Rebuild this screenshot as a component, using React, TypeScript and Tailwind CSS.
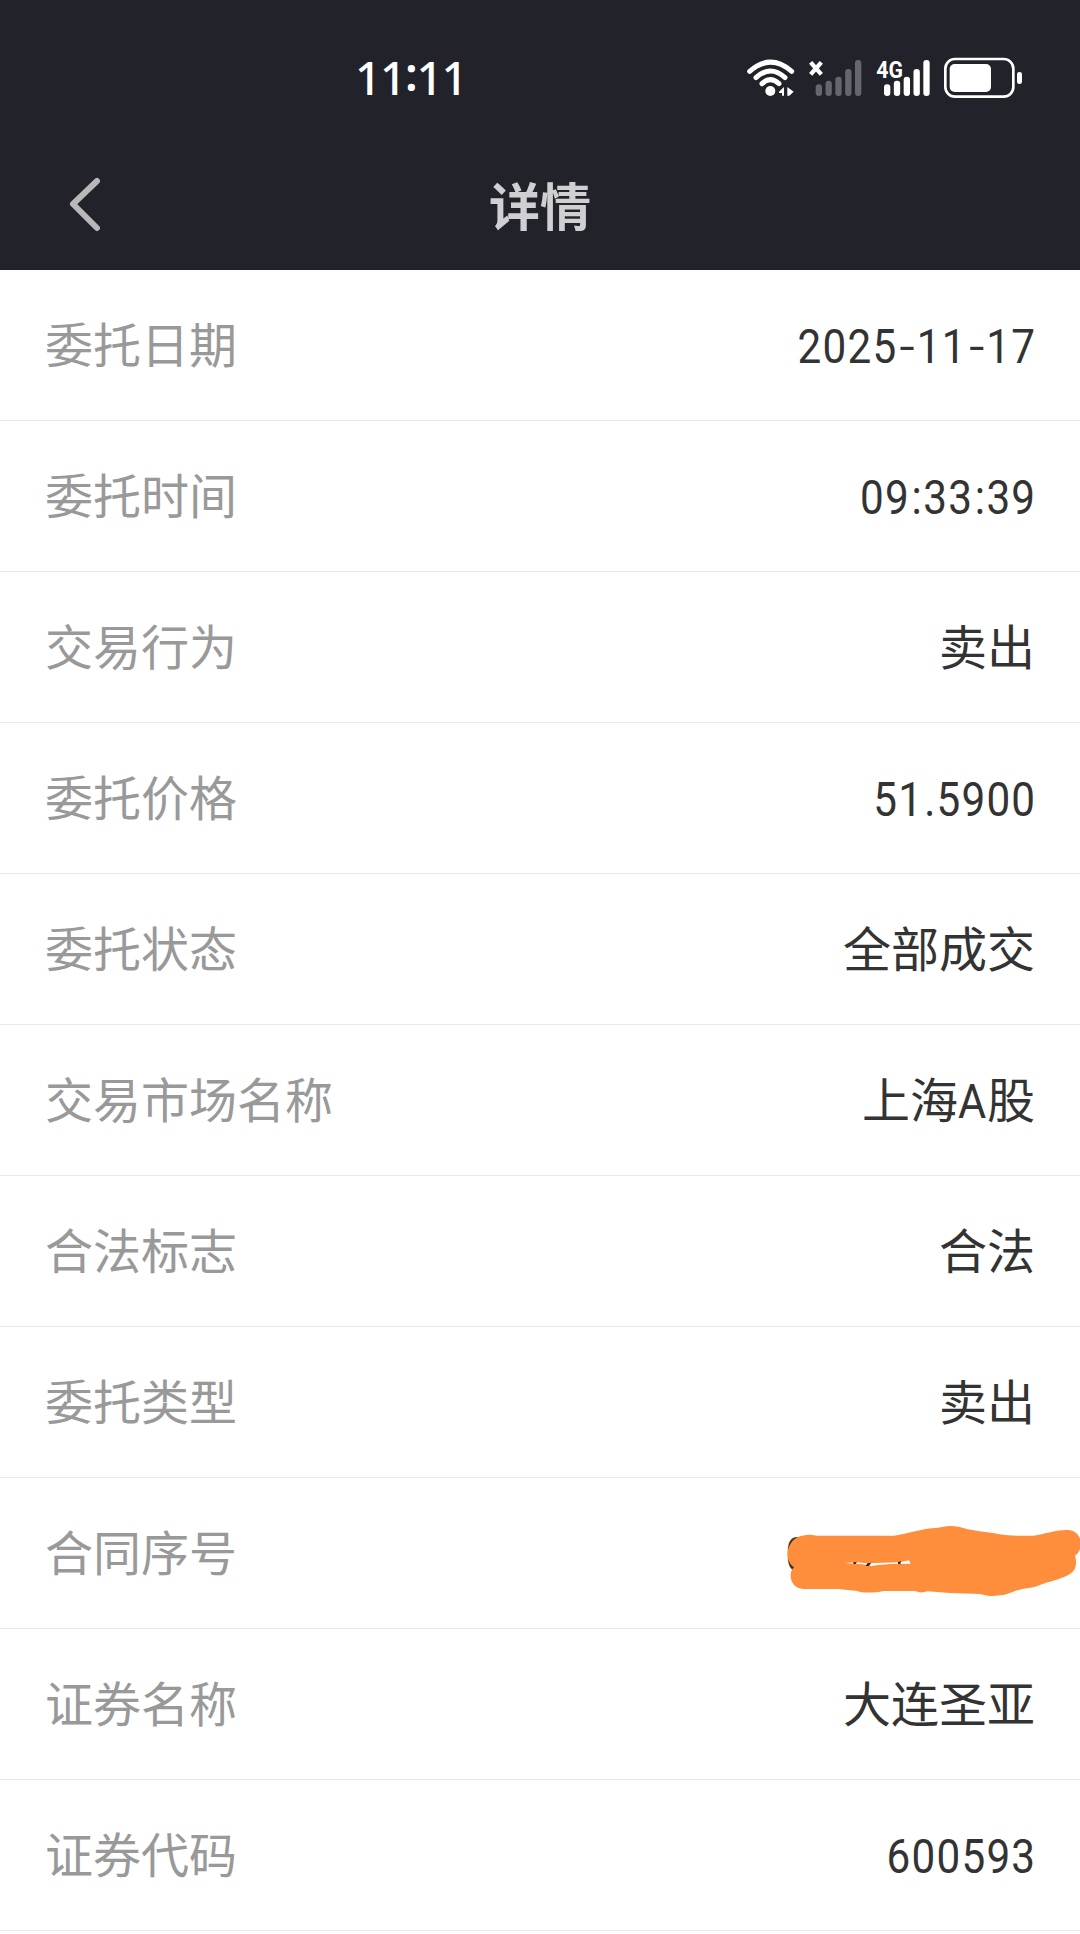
import React from 'react';

type Row = { label: string; value: string; redacted?: boolean };

const rows: Row[] = [
  { label: '委托日期', value: '2025-11-17' },
  { label: '委托时间', value: '09:33:39' },
  { label: '交易行为', value: '卖出' },
  { label: '委托价格', value: '51.5900' },
  { label: '委托状态', value: '全部成交' },
  { label: '交易市场名称', value: '上海A股' },
  { label: '合法标志', value: '合法' },
  { label: '委托类型', value: '卖出' },
  { label: '合同序号', value: '0', redacted: true },
  { label: '证券名称', value: '大连圣亚' },
  { label: '证券代码', value: '600593' },
];

function WifiIcon() {
  return (
    <svg width="48" height="38" viewBox="48 57 144 114" fill="none" stroke="#fff" strokeWidth="15" strokeLinecap="round">
      <path d="M56 94 Q118 39 182 94" />
      <path d="M75 113 Q118 73 162 113" />
      <path d="M93 131 Q118 107 144 131" />
      <circle cx="118" cy="153" r="15" fill="#fff" stroke="none" />
      <path d="M144 155 L159 141 V167 H153 V159 H144Z M169 141 L188 155 L175 167 H169Z" fill="#fff" stroke="none" />
    </svg>
  );
}

function Bars({ x, color }: { x: number; color: string }) {
  return (
    <g fill={color}>
      {[35, 46, 58, 81, 108].map((h, i) => (
        <rect key={h} x={x + i * 29.5} y={168 - h} width="19" height={h} rx="9" />
      ))}
    </g>
  );
}

function BatteryIcon() {
  return (
    <svg width="80" height="42" viewBox="636 51 240 126">
      <rect x="643" y="57" width="204" height="113" rx="29" fill="none" stroke="#fff" strokeWidth="8" />
      <rect x="656" y="72" width="124" height="84" rx="15" fill="#fff" />
      <rect x="858" y="96" width="15" height="36" rx="7" fill="#fff" />
    </svg>
  );
}

function Scribble() {
  return (
    <svg className="absolute left-0 top-0" width="310" height="120" viewBox="0 0 930 360">
      <path
        fill="#ff8e3c"
        d="M90 109 Q114 100 140 107 H370 C400 104 420 96 450 91 C475 83 500 85 520 80 C545 76 565 79 590 87 C620 93 650 97 670 99 C710 107 735 108 790 107 C825 103 850 91 890 90 C918 88 933 110 933 132 Q932 155 915 168 Q922 190 914 208 C900 230 870 235 845 244 C810 252 800 264 760 266 C730 272 715 285 690 286 C665 291 650 287 630 282 L540 279 L472 274 Q452 281 435 273 H340 C315 279 275 279 262 273 L205 267 H100 C75 265 61 247 62 225 Q63 210 72 202 C55 190 50 170 54 150 C60 128 72 115 90 109Z"
      />
      <path fill="#fff" d="M222 189 L260 187 L290 190 L390 187 L417 181 L422 191 L360 192 L325 195 L300 198 L280 193Z" />
      <path fill="#3a2418" d="M249 187 L260 186 L258 192 L251 192Z M292 190 L304 188 L297 198 L287 198Z M384 186 L393 184 L391 192 L384 192Z" />
    </svg>
  );
}

function Value({ text }: { text: string }) {
  if (!/^[\d.:-]+$/.test(text)) {
    return (
      <span className="mb-[7px] block h-[48px] text-[48px] leading-none">
        {text.split('').map((c, i) =>
          c === 'A' ? (
            <span key={i} className="inline-block w-[29px] origin-left scale-x-[0.9] font-[Roboto] leading-[0] font-normal">A</span>
          ) : (
            <span key={i}>{c}</span>
          ),
        )}
      </span>
    );
  }
  return (
    <span className="mt-[3px] mr-[-1px] inline-flex origin-right scale-x-[0.88] font-[Roboto] text-[48px] leading-none font-normal tracking-[1.4px]">
      {text.split('').map((c, i) => {
        if (c === '-') {
          return (
            <span key={i} className="inline-block w-[22px] text-center tracking-normal">
              <span className="inline-block scale-x-[1.3] scale-y-[0.9]">-</span>
            </span>
          );
        }
        if (c === ':' || c === '.') {
          return (
            <span key={i} className="inline-block w-[15px] text-center tracking-normal">{c}</span>
          );
        }
        return <span key={i}>{c}</span>;
      })}
    </span>
  );
}

export default function App() {
  return (
    <div className="min-h-[1934px] w-[1080px] overflow-hidden bg-white font-['Noto_Sans_CJK_SC',sans-serif]">
      <header className="flex h-[270px] flex-col bg-[#21222a]">
        <div className="flex h-[99px] items-end justify-between pr-[57px] pl-[355px]">
          <span className="mb-[-3px] flex font-['Noto_Sans'] text-[46px] leading-[50px] font-medium tracking-[-1.3px] text-white">
            <span>11</span>
            <span className="mt-[-4px] font-semibold">:</span>
            <span>11</span>
          </span>
          <div className="flex h-[42px] items-center">
            <WifiIcon />
            <svg className="ml-3" width="56" height="38" viewBox="228 57 168 114">
              <path d="M239 67 L271 103 M271 67 L239 103" stroke="#fff" strokeWidth="13" />
              <Bars x={254} color="#66676d" />
            </svg>
            <svg className="mr-3 ml-[13px] overflow-visible" width="55" height="38" viewBox="435 57 165 114">
              <text x="436" y="113" fill="#fff" fontFamily="Roboto" fontSize="74" fontWeight="700" textLength="80" lengthAdjust="spacingAndGlyphs">4G</text>
              <Bars x={459} color="#fff" />
            </svg>
            <BatteryIcon />
          </div>
        </div>
        <div className="grid flex-1 grid-cols-[1fr_auto_1fr] items-center px-[68px]">
          <svg className="mt-[39px]" width="34" height="56" viewBox="0 0 34 56" fill="none" stroke="#b8b8b8" strokeWidth="6" strokeLinecap="round" strokeLinejoin="round">
            <path d="M29 5 L5 28 L29 52" />
          </svg>
          <h1 className="mt-[49px] mb-[10px] text-[51px] leading-none font-bold text-[#d0d0d2]">详情</h1>
        </div>
      </header>
      <main>
        {rows.map((r) => (
          <div key={r.label} className="relative flex h-[151px] items-center justify-between border-b border-[#e9e9e9] pr-[45px] pl-[45px] text-[#333]">
            <span className="mb-[7px] text-[48px] leading-none text-[#999]">{r.label}</span>
            {r.redacted ? (
              <div className="absolute top-[22px] left-[770px] h-[120px] w-[310px]">
                <div className="pt-[28px] pl-[12px]">
                  <Value text={r.value} />
                </div>
                <Scribble />
              </div>
            ) : (
              <Value text={r.value} />
            )}
          </div>
        ))}
      </main>
    </div>
  );
}
